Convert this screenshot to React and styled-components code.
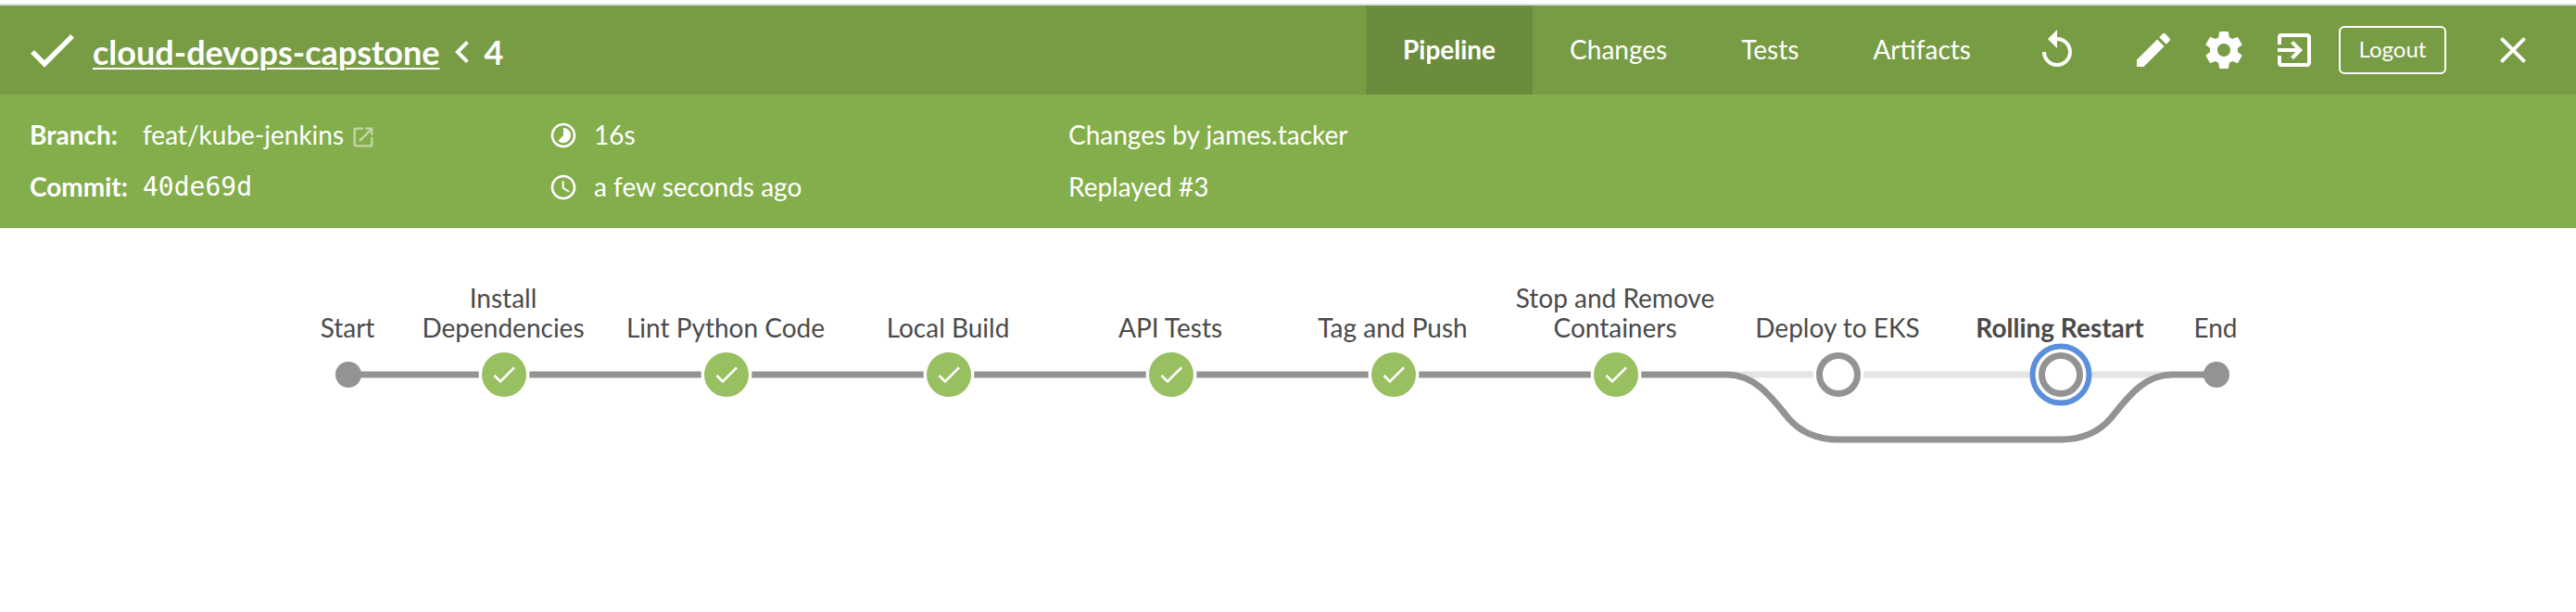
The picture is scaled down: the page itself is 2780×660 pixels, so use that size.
import React from "react";
import styled, { createGlobalStyle } from "styled-components";
import {
  MdCheck, MdChevronLeft, MdReplay, MdEdit, MdExitToApp,
  MdClose, MdLaunch, MdTimelapse, MdAccessTime,
} from "react-icons/md";

const Global = createGlobalStyle`
  * { box-sizing: border-box; }
  html, body { margin: 0; background: #fff; }
  body {
    font-family: Lato, "Liberation Sans", sans-serif;
    font-size: 28px;
    line-height: 34px;
    color: #4a4a4a;
    overflow: hidden;
  }
  svg { display: block; flex: none; }
`;

const Page = styled.div`
  width: 2780px;
  height: 660px;
  padding-top: 4px;
  overflow: hidden;
`;

const TopBar = styled.header`
  display: flex;
  align-items: stretch;
  height: 98px;
  border-top: 2px solid #dadcdb;
  background: #789c44;
  color: #fff;
`;

const Heading = styled.div`
  display: flex;
  align-items: center;
  width: 1474px;
  padding-left: 24px;
`;

const Title = styled.h1`
  display: flex;
  align-items: center;
  margin: 0;
  padding: 4px 0 0 12px;
  font-size: 36px;
  line-height: 44px;
  font-weight: 700;
  white-space: nowrap;
`;

const TitleLink = styled.a`
  text-decoration: underline;
  text-decoration-thickness: 2px;
  text-underline-offset: 3px;
`;

const Tabs = styled.nav`
  display: flex;
`;

const Tab = styled.a`
  display: flex;
  align-items: center;
  padding: 0 40px 2px;
  background: ${(p) => (p.$active ? "#6b8c3d" : "transparent")};
  font-weight: ${(p) => (p.$active ? 700 : 400)};
`;

const Actions = styled.div`
  display: flex;
  align-items: center;
  margin-left: auto;
  padding-right: 44px;
`;

const IconButton = styled.span`
  width: 48px;
  height: 48px;
  margin-right: ${(p) => p.$gap || 0}px;
`;

const Logout = styled.button`
  width: 116px;
  height: 52px;
  margin-right: 48px;
  padding: 0 0 2px;
  border: 2px solid #fff;
  border-radius: 6px;
  background: none;
  color: #fff;
  font: 400 24px/30px Lato, "Liberation Sans", sans-serif;
`;

const Details = styled.section`
  display: grid;
  grid-template-columns: 560px 561px 1fr;
  grid-template-rows: 56px 56px;
  height: 144px;
  padding: 16px 32px;
  background: #84ae4c;
  color: #fff;
`;

const Detail = styled.div`
  display: flex;
  align-items: center;
  white-space: nowrap;
`;

const Value = styled.span`
  padding-bottom: 2px;
`;

const Label = styled(Value)`
  width: 122px;
  font-weight: 700;
`;

const Hash = styled.span`
  font-family: "DejaVu Sans Mono", monospace;
`;

const Open = styled.span`
  margin-left: 7px;
  padding-top: 3px;
  opacity: 0.5;
`;

const DetailIcon = styled.span`
  margin-right: 17px;
`;

const Graph = styled.main`
  position: relative;
  height: 414px;
`;

const StageLabel = styled.div`
  position: absolute;
  left: ${(p) => p.$x - 119}px;
  bottom: 291px;
  width: 236px;
  line-height: 32px;
  text-align: center;
  white-space: pre-line;
  font-weight: ${(p) => (p.$selected ? 700 : 400)};
`;

const stages = [
  { x: 376, label: "Start", kind: "end" },
  { x: 544, label: "Install\nDependencies", kind: "success" },
  { x: 784, label: "Lint Python Code", kind: "success" },
  { x: 1024, label: "Local Build", kind: "success" },
  { x: 1264, label: "API Tests", kind: "success" },
  { x: 1504, label: "Tag and Push", kind: "success" },
  { x: 1744, label: "Stop and Remove\nContainers", kind: "success" },
  { x: 1984, label: "Deploy to EKS", kind: "skipped" },
  { x: 2224, label: "Rolling Restart", kind: "skipped", selected: true },
  { x: 2392, label: "End", kind: "end" },
];

const Y = 158;
const GREY = "#949393";

function Gear() {
  return (
    <svg width="48" height="48" viewBox="0 0 24 24" fill="currentColor">
      <path d="M19.43 12.98c.04-.32.07-.64.07-.98s-.03-.66-.07-.98l2.11-1.65c.19-.15.24-.42.12-.64l-2-3.46c-.12-.22-.39-.3-.61-.22l-2.49 1c-.52-.4-1.08-.73-1.69-.98l-.38-2.65C14.46 2.18 14.25 2 14 2h-4c-.25 0-.46.18-.49.42l-.38 2.65c-.61.25-1.17.59-1.69.98l-2.49-1c-.23-.09-.49 0-.61.22l-2 3.46c-.13.22-.07.49.12.64l2.11 1.65c-.04.32-.07.65-.07.98s.03.66.07.98l-2.11 1.65c-.19.15-.24.42-.12.64l2 3.46c.12.22.39.3.61.22l2.49-1c.52.4 1.08.73 1.69.98l.38 2.65c.03.24.24.42.49.42h4c.25 0 .46-.18.49-.42l.38-2.65c.61-.25 1.17-.59 1.69-.98l2.49 1c.23.09.49 0 .61-.22l2-3.46c.12-.22.07-.49-.12-.64l-2.11-1.65zM12 15.5c-1.93 0-3.5-1.57-3.5-3.5s1.57-3.5 3.5-3.5 3.5 1.57 3.5 3.5-1.57 3.5-3.5 3.5z" />
    </svg>
  );
}

function Node({ x, kind, selected }) {
  if (kind === "end") return <circle cx={x} cy={Y} r="14" fill={GREY} />;
  return (
    <g>
      <rect x={x - 27.3} y={Y - 27} width="54.6" height="54" fill="#fff" />
      {selected && <circle cx={x} cy={Y} r="30.5" fill="#fff" stroke="#5b8fdb" strokeWidth="6" />}
      {kind === "success" ? (
        <>
          <circle cx={x} cy={Y} r="24" fill="#98bf60" />
          <path
            transform={`translate(${x - 16} ${Y - 16}) scale(1.3333)`}
            d="M9 16.17L4.83 12l-1.42 1.41L9 19 21 7l-1.41-1.41z"
            fill="#fff"
          />
        </>
      ) : (
        <circle cx={x} cy={Y} r="20.5" fill="#fff" stroke={GREY} strokeWidth="7" />
      )}
    </g>
  );
}

function Pipeline() {
  return (
    <Graph>
      <svg width="2780" height="414">
        <g fill="none" strokeWidth="7">
          <path d="M1864 158H2344" stroke="#e4e4e4" />
          <path
            d="M376 158H1864C1896 158 1915 187 1930 205C1943 220 1960 228 1984 228H2224C2248 228 2265 220 2278 205C2293 187 2312 158 2344 158H2392"
            stroke={GREY}
          />
        </g>
        {stages.map((s) => <Node key={s.x} {...s} />)}
      </svg>
      {stages.map((s) => (
        <StageLabel key={s.x} $x={s.x} $selected={s.selected}>{s.label}</StageLabel>
      ))}
    </Graph>
  );
}

export default function App() {
  return (
    <Page>
      <Global />
      <TopBar>
        <Heading>
          <MdCheck size={64} />
          <Title>
            <TitleLink>cloud-devops-capstone</TitleLink>
            <MdChevronLeft size={48} />
            <span>4</span>
          </Title>
        </Heading>
        <Tabs>
          <Tab $active>Pipeline</Tab>
          <Tab>Changes</Tab>
          <Tab>Tests</Tab>
          <Tab>Artifacts</Tab>
        </Tabs>
        <Actions>
          <IconButton $gap={56}><MdReplay size={48} /></IconButton>
          <IconButton $gap={28}><MdEdit size={48} /></IconButton>
          <IconButton $gap={28}><Gear /></IconButton>
          <IconButton $gap={24}><MdExitToApp size={48} /></IconButton>
          <Logout>Logout</Logout>
          <IconButton><MdClose size={48} /></IconButton>
        </Actions>
      </TopBar>
      <Details>
        <Detail>
          <Label>Branch:</Label>
          <Value>feat/kube-jenkins</Value>
          <Open><MdLaunch size={28} /></Open>
        </Detail>
        <Detail>
          <DetailIcon><MdTimelapse size={32} /></DetailIcon>
          <Value>16s</Value>
        </Detail>
        <Detail><Value>Changes by james.tacker</Value></Detail>
        <Detail>
          <Label>Commit:</Label>
          <Hash>40de69d</Hash>
        </Detail>
        <Detail>
          <DetailIcon><MdAccessTime size={32} /></DetailIcon>
          <Value>a few seconds ago</Value>
        </Detail>
        <Detail><Value>Replayed #3</Value></Detail>
      </Details>
      <Pipeline />
    </Page>
  );
}
